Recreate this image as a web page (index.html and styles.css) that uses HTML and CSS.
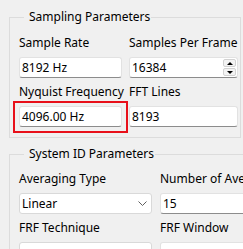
FILE: index.html
```html
<!DOCTYPE html>
<html lang="en">
<head>
    <meta charset="UTF-8">
    <meta name="viewport" content="width=device-width, initial-scale=1.0">
    <title>Sampling Settings</title>
    <link rel="stylesheet" href="styles.css">
</head>
<body>

    <div class="panel">
        <fieldset class="group group-sampling">
            <legend>Sampling Parameters</legend>
            <div class="fields">
                <div class="field">
                    <label>Sample Rate</label>
                    <div class="box">8192 Hz</div>
                </div>
                <div class="field">
                    <label>Samples Per Frame</label>
                    <div class="box">
                        <span>16384</span>
                        <span class="spinner">
                            <span class="spin-btn"><i class="arrow-up"></i></span>
                            <span class="spin-btn"><i class="arrow-down"></i></span>
                        </span>
                    </div>
                </div>
                <div class="field">
                    <label>Nyquist Frequency</label>
                    <div class="highlight">
                        <div class="box">4096.00 Hz</div>
                    </div>
                </div>
                <div class="field">
                    <label>FFT Lines</label>
                    <div class="box">8193</div>
                </div>
            </div>
        </fieldset>

        <fieldset class="group group-sysid">
            <legend>System ID Parameters</legend>
            <div class="fields">
                <div class="field">
                    <label>Averaging Type</label>
                    <div class="box combo">
                        <span>Linear</span>
                        <svg class="chevron" width="9" height="5" viewBox="0 0 9 5">
                            <polyline points="0.5,0.5 4.5,4.5 8.5,0.5" fill="none" stroke="#5f5f5f" stroke-width="1"/>
                        </svg>
                    </div>
                </div>
                <div class="field">
                    <label>Number of Averages</label>
                    <div class="box">15</div>
                </div>
                <div class="field">
                    <label>FRF Technique</label>
                    <div class="box combo"></div>
                </div>
                <div class="field">
                    <label>FRF Window</label>
                    <div class="box"></div>
                </div>
            </div>
        </fieldset>
    </div>

</body>
</html>
```

FILE: styles.css
```css
body {
    margin: 0;
    background-color: #f0f0f0;
    font-family: "Noto Sans", "Open Sans", sans-serif;
    font-size: 12px;
    color: #000;
    overflow: hidden;
}
.panel {
    padding: 9px 0 0 9px;
    width: 330px;
}
.group {
    border: 1px solid #dcdcdc;
    margin: 0;
    padding: 10px 0 10px 9px;
    min-width: 0;
}
.group legend {
    margin-left: 5px;
    padding: 0 1px 0 5px;
    line-height: 16px;
}
.group-sampling {
    width: 232px;
    box-sizing: border-box;
}
.group-sysid {
    margin-top: 8px;
    padding-top: 9px;
    width: 320px;
    box-sizing: border-box;
}
.fields {
    display: grid;
    row-gap: 6px;
}
.group-sampling .fields {
    grid-template-columns: 103px 109px;
    column-gap: 7px;
}
.group-sysid .fields {
    grid-template-columns: 133px 133px;
    column-gap: 8px;
}
.field {
    display: flex;
    flex-direction: column;
    gap: 6px;
    min-width: 0;
}
.field label {
    line-height: 16px;
    white-space: nowrap;
}
.box {
    height: 21px;
    box-sizing: border-box;
    background-color: #fff;
    border: 1px solid #e2e2e2;
    border-bottom-color: #8c8c8c;
    border-radius: 3px;
    padding: 0 1px 0 2px;
    line-height: 19px;
    display: flex;
    align-items: center;
    justify-content: space-between;
    white-space: nowrap;
}
.box.combo {
    border-color: #d9d9d9;
    padding-right: 4px;
}
.highlight {
    margin: -5px -6px -6px;
    padding: 3px 4px 4px;
    border: 2px solid #e8101a;
}
.spinner {
    display: flex;
    flex-direction: column;
    gap: 1px;
}
.spin-btn {
    width: 13px;
    height: 8px;
    box-sizing: border-box;
    background-color: #f3f3f3;
    border: 1px solid #d2d2d2;
    border-radius: 2px;
    display: flex;
    align-items: center;
    justify-content: center;
}
.arrow-up {
    width: 0;
    height: 0;
    border-left: 3px solid transparent;
    border-right: 3px solid transparent;
    border-bottom: 3px solid #000;
}
.arrow-down {
    width: 0;
    height: 0;
    border-left: 3px solid transparent;
    border-right: 3px solid transparent;
    border-top: 3px solid #000;
}
.chevron {
    display: block;
}
```
